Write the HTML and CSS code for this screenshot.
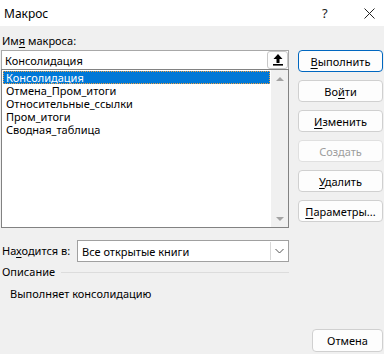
FILE: index.html
```html
<!DOCTYPE html>
<html>
	<head>
		<meta charset="utf-8">
		<link rel="stylesheet" href="styles.css">
	</head>
	<body>
		<header class="titlebar">
			<span class="title">Макрос</span>
			<span class="help">?</span>
			<span class="close">
				<svg width="11" height="11" viewBox="0 0 11 11"><path d="M0.5 0.5L10.5 10.5M10.5 0.5L0.5 10.5" stroke="#222" stroke-width="1"/></svg>
			</span>
		</header>
		<main class="dialog">
			<div class="left">
				<label class="label">Им<u>я</u> макроса:</label>
				<div class="namebox">
					<span class="name">Консолидация</span>
					<span class="upbtn">
						<svg width="10" height="12" viewBox="0 0 10 12"><path d="M5 0L9.5 5H6.5V9H3.5V5H0.5Z" fill="#000"/><rect x="0" y="10" width="10" height="1.6" fill="#000"/></svg>
					</span>
				</div>
				<div class="list">
					<ul class="items">
						<li class="selected">Консолидация</li>
						<li>Отмена_Пром_итоги</li>
						<li>Относительные_ссылки</li>
						<li>Пром_итоги</li>
						<li>Сводная_таблица</li>
					</ul>
					<div class="scrollbar">
						<span class="arrow up"></span>
						<span class="arrow down"></span>
					</div>
				</div>
				<div class="where">
					<label class="label">На<u>х</u>одится в:</label>
					<div class="select">
						<span class="value">Все открытые книги</span>
						<span class="drop">
							<svg width="9" height="6" viewBox="0 0 9 6"><path d="M0.5 1L4.5 5L8.5 1" fill="none" stroke="#555" stroke-width="1"/></svg>
						</span>
					</div>
				</div>
				<div class="group">
					<span class="label">Описание</span>
					<span class="rule"></span>
				</div>
				<p class="desc">Выполняет консолидацию</p>
			</div>
			<div class="buttons">
				<button class="btn default"><u>В</u>ыполнить</button>
				<button class="btn">Во<u>й</u>ти</button>
				<button class="btn"><u>И</u>зменить</button>
				<button class="btn" disabled>Создать</button>
				<button class="btn"><u>У</u>далить</button>
				<button class="btn"><u>П</u>араметры...</button>
			</div>
		</main>
		<footer class="footer">
			<button class="btn cancel">Отмена</button>
		</footer>
	</body>
</html>
```

FILE: styles.css
```css
body {
	margin: 0;
	width: 384px;
	height: 354px;
	overflow: hidden;
	background: #f0f0f0;
	font-family: "Noto Sans", "Open Sans", sans-serif;
	font-size: 11px;
	color: #000;
}
u {
	text-decoration-thickness: 1px;
	text-underline-offset: 2px;
}
.titlebar {
	height: 26px;
	background: #fff;
	display: flex;
	align-items: center;
	font-size: 12px;
}
.title {
	padding-left: 4px;
	flex: 1;
}
.help {
	width: 42px;
	font-size: 13px;
	color: #222;
}
.close {
	width: 20px;
	display: flex;
	align-items: center;
	padding-top: 1px;
}
.dialog {
	display: flex;
	gap: 9px;
	padding-left: 1px;
}
.left {
	width: 288px;
}
.label {
	display: block;
	height: 16px;
	line-height: 16px;
	padding-left: 1px;
}
.left > .label {
	margin-top: 7px;
	margin-bottom: 1px;
}
.namebox {
	height: 18px;
	background: #fff;
	border: 1px solid #a8a8a8;
	border-bottom: none;
	display: flex;
	align-items: center;
	justify-content: space-between;
}
.name {
	padding-left: 3px;
}
.upbtn {
	width: 19px;
	height: 16px;
	border: 1px solid #c8c8c8;
	border-radius: 3px;
	background: #fdfdfd;
	display: flex;
	align-items: center;
	justify-content: center;
}
.list {
	height: 157px;
	border: 1px solid #828282;
	background: #fff;
	display: flex;
}
.items {
	list-style: none;
	margin: 0;
	padding: 1px 0 0 1px;
	flex: 1;
}
.items li {
	height: 13px;
	line-height: 13px;
	padding-left: 3px;
	margin-right: 1px;
}
.items li.selected {
	background: #0078d7;
	color: #fff;
	outline: 1px dotted #f0a040;
	outline-offset: -1px;
}
.scrollbar {
	width: 17px;
	background: #f0f0f0;
	display: flex;
	flex-direction: column;
	justify-content: space-between;
	align-items: center;
	padding: 7px 0 6px;
}
.arrow {
	width: 0;
	height: 0;
	border-left: 4px solid transparent;
	border-right: 4px solid transparent;
}
.arrow.up {
	border-bottom: 4px solid #a3a3a3;
}
.arrow.down {
	border-top: 4px solid #a3a3a3;
}
.where {
	display: flex;
	align-items: center;
	margin-top: 12px;
}
.where .label {
	width: 75px;
}
.select {
	flex: 1;
	height: 20px;
	background: #fff;
	border: 1px solid #a0a0a0;
	display: flex;
	align-items: center;
	justify-content: space-between;
}
.value {
	padding-left: 4px;
}
.drop {
	width: 16px;
	height: 18px;
	margin-right: 1px;
	border-left: 1px solid #d8d8d8;
	display: flex;
	align-items: center;
	justify-content: center;
}
.group {
	display: flex;
	align-items: center;
	margin-top: 2px;
}
.group .label {
	padding-right: 6px;
}
.rule {
	flex: 1;
	height: 1px;
	background: #dcdcdc;
}
.desc {
	margin: 6px 0 0 9px;
	line-height: 16px;
}
.buttons {
	width: 85px;
	padding-top: 24px;
	display: flex;
	flex-direction: column;
	gap: 8px;
}
.btn {
	height: 22px;
	background: #fdfdfd;
	border: 1px solid #d0d0d0;
	border-radius: 4px;
	font: inherit;
	color: #000;
	padding: 0;
}
.btn.default {
	border-color: #0067c0;
}
.btn:disabled {
	color: #9d9d9d;
	border-color: #e0e0e0;
}
.footer {
	display: flex;
	justify-content: flex-end;
	padding: 0 1px 0 0;
	margin-top: 27px;
}
.btn.cancel {
	width: 71px;
	height: 23px;
}
```
